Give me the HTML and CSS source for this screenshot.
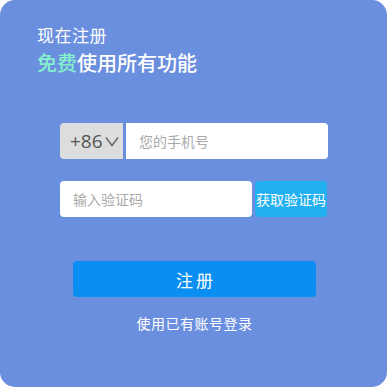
FILE: index.html
```html
<!DOCTYPE html>
<html lang="zh">
<head>
<meta charset="utf-8">
<link rel="stylesheet" href="styles.css">
</head>
<body>
<div class="card">
  <div class="title">
    <div class="t1">现在注册</div>
    <div class="t2"><span class="free">免费</span>使用所有功能</div>
  </div>
  <div class="form">
    <div class="row">
      <div class="prefix"><span class="code">+86</span><svg class="chev" width="14" height="11" viewBox="0 0 14 11"><path d="M1 1.5 L7 9.5 L13 1.5" fill="none" stroke="#666" stroke-width="1.4"/></svg></div>
      <div class="input phone">您的手机号</div>
    </div>
    <div class="row row2">
      <div class="input vcode">输入验证码</div>
      <div class="getcode">获取验证码</div>
    </div>
    <div class="submit">注册</div>
    <div class="login">使用已有账号登录</div>
  </div>
</div>
</body>
</html>
```
FILE: styles.css
```css
html, body {
  margin: 0;
  padding: 0;
  background: #fff;
}
body {
  font-family: "Noto Sans CJK SC", "Noto Sans", sans-serif;
}
.card {
  width: 387px;
  height: 387px;
  background: #6b8fdf;
  border-radius: 15px;
  box-sizing: border-box;
  padding-top: 24px;
  color: #fff;
}
.title {
  padding-left: 37px;
}
.t1 {
  font-size: 17px;
  line-height: 22px;
  letter-spacing: 0.5px;
}
.t2 {
  margin-top: 3px;
  font-size: 20px;
  line-height: 28px;
  font-weight: 500;
}
.free {
  color: #84f0cc;
}
.form {
  margin-top: 46px;
  padding-left: 60px;
  width: 268px;
}
.row {
  display: flex;
  height: 36px;
}
.prefix {
  width: 63px;
  background: #dcdddd;
  border-radius: 4px 0 0 4px;
  display: flex;
  align-items: center;
  padding-left: 10px;
  box-sizing: border-box;
  color: #555;
  font-size: 19px;
}
.code {
  font-family: "Open Sans", "Noto Sans", sans-serif;
}
.chev {
  margin-left: 2px;
  margin-top: 1px;
}
.input {
  background: #fff;
  display: flex;
  align-items: center;
  color: #aaa;
  font-size: 14px;
  box-sizing: border-box;
}
.phone {
  margin-left: 3px;
  flex: 1;
  border-radius: 0 4px 4px 0;
  padding-left: 13px;
}
.row2 {
  margin-top: 22px;
}
.vcode {
  width: 192px;
  border-radius: 4px;
  padding-left: 13px;
}
.getcode {
  margin-left: 3px;
  width: 72px;
  height: 36px;
  background: #22b0f0;
  border-radius: 4px;
  display: flex;
  align-items: center;
  justify-content: center;
  font-size: 14px;
  white-space: nowrap;
  color: #fff;
}
.submit {
  margin-top: 44px;
  margin-left: 13px;
  width: 243px;
  height: 36px;
  background: #0b8ef2;
  border-radius: 4px;
  display: flex;
  align-items: center;
  justify-content: center;
  font-size: 17px;
  letter-spacing: 3px;
  text-indent: 3px;
}
.login {
  margin-top: 17px;
  margin-left: 13px;
  width: 243px;
  text-align: center;
  font-size: 14px;
  line-height: 18px;
  letter-spacing: 0.5px;
}
```
